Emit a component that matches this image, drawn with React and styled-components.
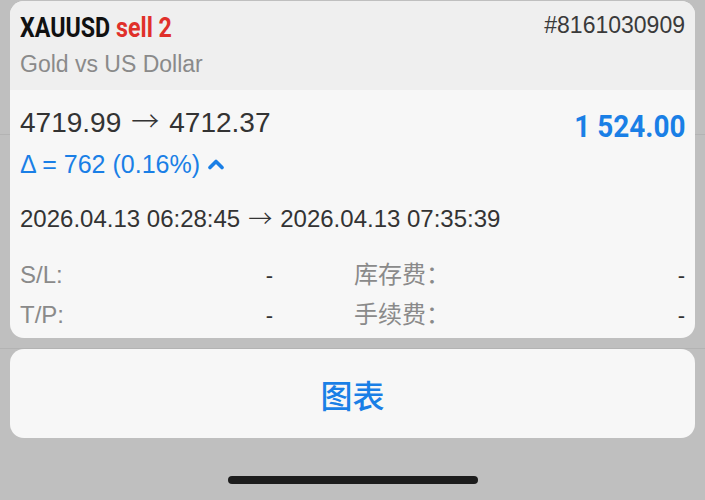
import React from 'react';
import styled, { createGlobalStyle } from 'styled-components';

const GlobalStyle = createGlobalStyle`
  html, body {
    margin: 0;
    padding: 0;
  }
  body {
    width: 705px;
    height: 500px;
    overflow: hidden;
    background-color: #bfbfbf;
    background-image:
      linear-gradient(#b3b3b3, #b3b3b3),
      linear-gradient(#b3b3b3, #b3b3b3);
    background-size: 100% 1px, 100% 1px;
    background-position: 0 134px, 0 348px;
    background-repeat: no-repeat;
    font-family: "Liberation Sans", Arial, sans-serif;
  }
`;

const Sheet = styled.div`
  display: flex;
  flex-direction: column;
  padding: 1px 10px 0;
  height: 499px;
  box-sizing: border-box;
`;

const Card = styled.div`
  background: #f7f7f7;
  border-radius: 14px;
  overflow: hidden;
`;

const Header = styled.div`
  background: #efefef;
  height: 89px;
  box-sizing: border-box;
  padding: 10px 10px 0;
`;

const Row = styled.div`
  display: flex;
  justify-content: space-between;
  align-items: flex-start;
`;

// the app uses a narrow bold face; squeeze Roboto to match
const Title = styled.div`
  display: inline-block;
  font-family: Roboto, sans-serif;
  font-weight: 700;
  font-size: 28px;
  line-height: 34px;
  color: #111;
  transform: scaleX(0.83);
  transform-origin: left center;
  white-space: nowrap;
`;

const Side = styled.span`
  color: #e0302a;
`;

const Ticket = styled.div`
  font-size: 23px;
  line-height: 28px;
  color: #3a3a3a;
`;

const Description = styled.div`
  font-size: 23px;
  line-height: 28px;
  margin-top: 5px;
  color: #8a8a8a;
`;

const Body = styled.div`
  padding: 16px 10px 8px;
`;

const Prices = styled.div`
  font-size: 28px;
  line-height: 34px;
  color: #333;
`;

const Arrow = styled.span`
  font-family: "Noto Sans CJK SC", sans-serif;
  font-weight: 300;
  line-height: 0;
  padding: 0 ${(p) => p.$pad}px;
`;

const Profit = styled.div`
  display: inline-block;
  margin-top: 4px;
  font-family: Roboto, sans-serif;
  font-weight: 700;
  font-size: 31px;
  line-height: 34px;
  color: #1a7fe6;
  transform: scaleX(0.9);
  transform-origin: right center;
  white-space: nowrap;
`;

const Delta = styled.div`
  display: flex;
  align-items: center;
  gap: 8px;
  font-size: 25px;
  line-height: 30px;
  margin-top: 5px;
  color: #1a7fe6;
`;

const Dates = styled.div`
  font-size: 24px;
  line-height: 30px;
  margin-top: 25px;
  color: #333;
`;

const Details = styled.div`
  display: grid;
  grid-template-columns: 253px 1fr;
  grid-auto-rows: 30px;
  column-gap: 81px;
  row-gap: 10px;
  margin-top: 26px;
`;

const Field = styled.div`
  display: flex;
  justify-content: space-between;
  align-items: baseline;
  font-size: 24px;
  line-height: 30px;
  height: 30px;
`;

const Label = styled.span`
  color: #8a8a8a;
  font-family: "Liberation Sans", "Noto Sans CJK SC", sans-serif;
`;

const Value = styled.span`
  color: #333;
  font-size: 22px;
`;

const Action = styled.button`
  margin-top: 11px;
  height: 89px;
  border: none;
  border-radius: 14px;
  background: #f7f7f7;
  color: #1a7fe6;
  font-family: "Noto Sans CJK SC", sans-serif;
  font-weight: 500;
  font-size: 32px;
  cursor: pointer;
`;

const HomeIndicator = styled.div`
  align-self: center;
  margin-top: 38px;
  width: 250px;
  height: 8px;
  border-radius: 4px;
  background: #1c1c1c;
`;

const Chevron = () => (
  <svg width="16" height="12" viewBox="0 0 16 12">
    <path d="M2 9.5 L8 3.5 L14 9.5" fill="none" stroke="#1a7fe6" strokeWidth="3.6" strokeLinecap="round" strokeLinejoin="round" />
  </svg>
);

const fields = [
  ['S/L:', '-', '库存费：', '-'],
  ['T/P:', '-', '手续费：', '-'],
];

export default function App() {
  return (
    <>
      <GlobalStyle />
      <Sheet>
        <Card>
          <Header>
            <Row>
              <Title>XAUUSD <Side>sell 2</Side></Title>
              <Ticket>#8161030909</Ticket>
            </Row>
            <Description>Gold vs US Dollar</Description>
          </Header>
          <Body>
            <Row>
              <Prices>4719.99<Arrow $pad={10}>→</Arrow>4712.37</Prices>
              <Profit>1 524.00</Profit>
            </Row>
            <Delta>
              <span>Δ = 762 (0.16%)</span>
              <Chevron />
            </Delta>
            <Dates>2026.04.13 06:28:45<Arrow $pad={8}>→</Arrow>2026.04.13 07:35:39</Dates>
            <Details>
              {fields.map(([l1, v1, l2, v2]) => (
                <React.Fragment key={l1}>
                  <Field><Label>{l1}</Label><Value>{v1}</Value></Field>
                  <Field><Label>{l2}</Label><Value>{v2}</Value></Field>
                </React.Fragment>
              ))}
            </Details>
          </Body>
        </Card>
        <Action>图表</Action>
        <HomeIndicator />
      </Sheet>
    </>
  );
}
